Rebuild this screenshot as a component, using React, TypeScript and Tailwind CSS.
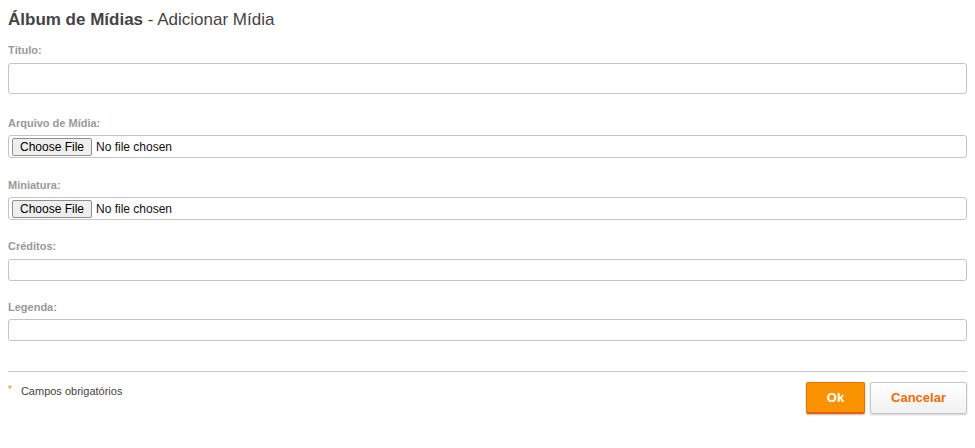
export default function App() {
  const label = "block text-[11px] leading-[14px] font-bold text-[#999]";
  const textInput =
    "block w-full rounded-[3px] border border-[#c4c4c4] bg-white px-2 outline-none text-[13px]";
  const fileInput =
    "block w-full h-[23px] rounded-[3px] border border-[#c4c4c4] bg-white pl-[3px] pt-[2px] text-[12px] leading-[16px] text-[#111] [font-family:'Liberation_Sans',Arial,sans-serif] file:mr-[4px] file:h-[18px] file:w-[80px] file:rounded-[2px] file:border file:border-solid file:border-[#8f8f8f] file:bg-[#efefef] file:px-[6px] file:text-[12px] file:text-black";

  return (
    <div className="min-h-screen bg-white px-2 pt-2 [font-family:'Liberation_Sans',Arial,sans-serif]">
      <h1 className="text-[17px] leading-6 text-[#444]">
        <span className="font-bold">Álbum de Mídias</span> - Adicionar Mídia
      </h1>

      <form className="mt-[11px]">
        <div className="mb-[22px]">
          <label className={label}>Título:</label>
          <input type="text" className={`${textInput} mt-[6px] h-[31px]`} />
        </div>

        <div className="mb-[20px]">
          <label className={label}>Arquivo de Mídia:</label>
          <input type="file" className={`${fileInput} mt-[5px]`} />
        </div>

        <div className="mb-[19px]">
          <label className={label}>Miniatura:</label>
          <input type="file" className={`${fileInput} mt-[5px]`} />
        </div>

        <div className="mb-[19px]">
          <label className={label}>Créditos:</label>
          <input type="text" className={`${textInput} mt-[6px] h-[22px]`} />
        </div>

        <div>
          <label className={label}>Legenda:</label>
          <input type="text" className={`${textInput} mt-[5px] h-[22px]`} />
        </div>

        <div className="mt-[30px] border-t border-[#c8c8c8] pt-[10px] flex items-start justify-between">
          <div className="flex items-center gap-[9px] pt-[1px] text-[11px] text-[#444]">
            <span className="text-[#f39200] text-[10px] leading-none -mt-[3px]">*</span>
            <span>Campos obrigatórios</span>
          </div>
          <div className="flex gap-[5px]">
            <button
              type="button"
              className="h-[32px] w-[59px] rounded-[2px] border border-[#f26d00] border-b-2 border-b-[#e85d00] bg-[#fb9300] text-[13px] font-bold text-white shadow-[0_1px_2px_rgba(0,0,0,0.25)]"
            >
              Ok
            </button>
            <button
              type="button"
              className="h-[32px] w-[97px] rounded-[2px] border border-[#c6c6c6] bg-gradient-to-b from-white to-[#f1f1f1] text-[13px] font-bold text-[#f26d00] shadow-[0_1px_2px_rgba(0,0,0,0.2)]"
            >
              Cancelar
            </button>
          </div>
        </div>
      </form>
    </div>
  );
}
